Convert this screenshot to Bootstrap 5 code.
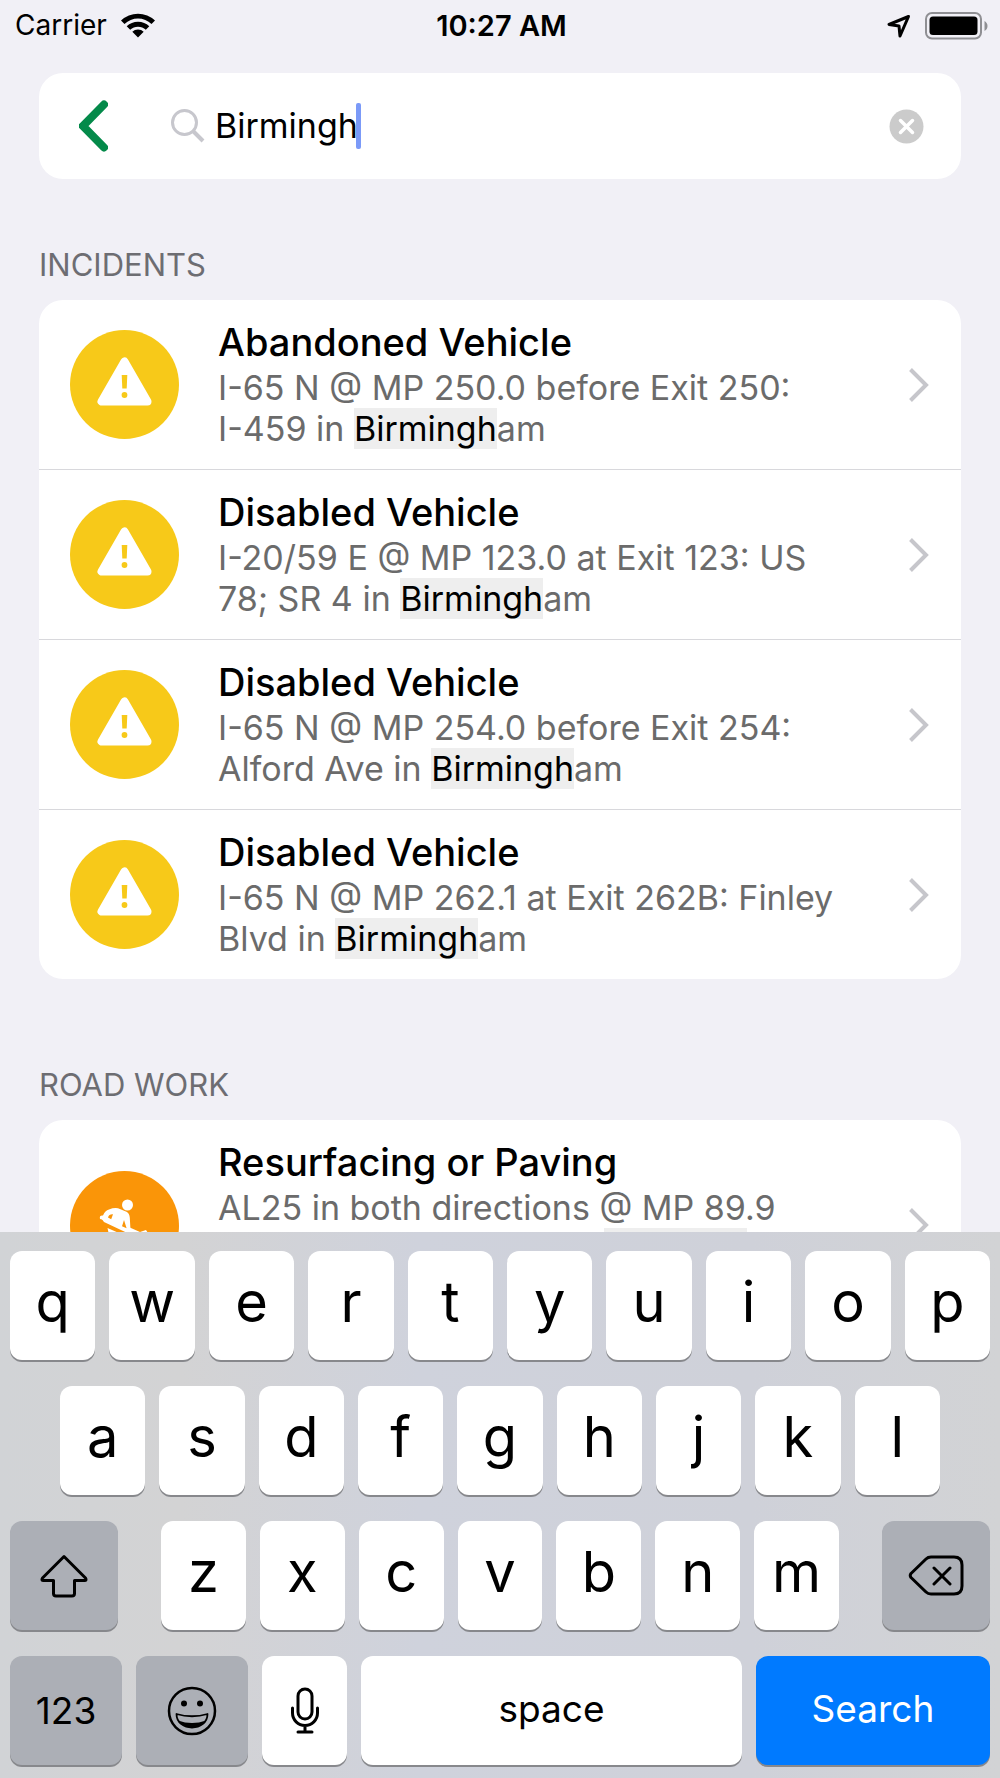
<!DOCTYPE html>
<html lang="en">
<head>
<meta charset="utf-8">
<meta name="viewport" content="width=device-width, initial-scale=1">
<title>Search</title>
<link href="https://cdn.jsdelivr.net/npm/bootstrap@5.3.0/dist/css/bootstrap.min.css" rel="stylesheet">
<style>
  body { background: #f1f0f6; color: #000; font-family: Inter, "Liberation Sans", sans-serif; }
  .screen { min-height: 0; padding: 0 39px; }
  .status-bar { height: 51px; padding: 0 12px 0 15px; font-size: 28px; line-height: 51px; }
  .status-bar > div { flex: 1 1 0; gap: 14px; }
  .status-bar time { font-size: 29px; }
  .search-box { height: 106px; margin-top: 22px; border-radius: 24px; padding: 0 37px 0 40px; }
  .search-icon { margin: 0 10px 0 63px; }
  .search-box input { width: 141px; font-size: 34px; line-height: 46px; outline: 0; color: #000; }
  .caret { width: 5px; height: 46px; border-radius: 2px; background: #7b9af8; }
  .section-title { font-size: 31px; line-height: 40px; color: #6d6d72; font-weight: 400; margin: 66px 0 15px; }
  .section-title.later { margin-top: 86px; }
  .results { border-radius: 24px; }
  .results .list-group-item { padding: 20px 32px 20px 31px; border-color: #d8d8dc; color: #6b6b6b; }
  .disc { width: 109px; height: 109px; }
  .details { margin-left: 39px; font-size: 34px; line-height: 41px; }
  .details h3 { font-size: 38px; line-height: 45px; font-weight: 500; color: #000; margin: 0 0 2px; }
  .details mark { padding: 0; background: #eee; color: #000; }
  .keyboard { padding: 19px 10px 13px; gap: 26px;
    background: linear-gradient(90deg, #d1d3d6, #d3d3d4 18%, #cfd2dc 42%, #cfd1d9 75%, #d2d3d5); }
  .key-row { gap: 14px; }
  .key-row.inset { padding: 0 50px; }
  .key-row.outer { gap: 43px; }
  .key { flex: 1 1 0; min-width: 0; height: 109px; border: 0; border-radius: 12px; padding: 0 0 8px; background: #fff; color: #000;
    display: flex; align-items: center; justify-content: center;
    box-shadow: 0 2px 0 #87888c; font-size: 56px; line-height: 84px; font-weight: 400; }
  .key-dark { background: #acafb6; padding: 0; }
  .key-word { font-size: 37px; font-weight: 400; padding-bottom: 4px; }
  .key-dark.key-word { padding: 0; }
  .key-blue { background: #007aff; color: #fff; }
  .key-side { flex: 0 0 108px; }
  .key-mode { flex: 0 0 112px; }
  .key-mic { flex: 0 0 85px; padding: 0; }
  .key-go { flex: 0 0 234px; }
</style>
</head>
<body>
<svg class="d-none">
  <symbol id="warn" viewBox="0 0 109 109">
    <circle cx="54.500" cy="54.500" r="54.500" fill="#f7c919"/>
    <path d="M54.500 31.500 31.500 71.500h46z" fill="#fff" stroke="#fff" stroke-width="8" stroke-linejoin="round"/>
    <path d="M51.700 45h5.600l-.6 13.500h-4.400z" fill="#f7c919"/><circle cx="54.500" cy="65" r="2.900" fill="#f7c919"/>
  </symbol>
  <symbol id="more" viewBox="0 0 20 34"><path d="m1.500 1.500 15.500 15.500-15.500 15.500" fill="none" stroke="#c6c6cb" stroke-width="4"/></symbol>
</svg>
<div class="vh-100 d-flex flex-column overflow-hidden">
  <header class="status-bar d-flex align-items-center flex-shrink-0">
    <div class="d-flex align-items-center">
      <span>Carrier</span>
      <svg width="34" height="25" viewBox="0 0 34 25" aria-label="Wi-Fi"><path d="M0 7.500a24.500 24.500 0 0 1 34 0L30.500 11a19.500 19.500 0 0 0-27 0zM5.700 13.300a16.200 16.200 0 0 1 22.600 0L24.800 16.800a11.300 11.300 0 0 0-15.600 0zM11.300 18.800a8.200 8.200 0 0 1 11.400 0L17 24.500z"/></svg>
    </div>
    <time class="fw-semibold">10:27 AM</time>
    <div class="d-flex align-items-center justify-content-end">
      <svg width="24" height="24" viewBox="0 0 24 24" aria-label="Location"><path d="M21.500 2.500 2 10.500 12 12l1 10z" fill="none" stroke="#000" stroke-width="3" stroke-linejoin="round"/></svg>
      <svg width="63" height="28" viewBox="0 0 63 28" aria-label="Battery"><rect x="1" y="1" width="55" height="25.500" rx="6" fill="none" stroke="#8f8f93" stroke-width="2"/><rect x="4.500" y="4.500" width="48" height="18.500" rx="3.500"/><path d="M59.500 9c4 2 4 8 0 10z" fill="#8f8f93"/></svg>
    </div>
  </header>

  <main class="screen flex-fill overflow-hidden">
    <form class="search-box bg-white d-flex align-items-center" role="search">
      <button type="button" class="btn p-0 border-0 d-flex" aria-label="Back">
        <svg width="29" height="52" viewBox="0 0 29 52"><path d="M25 4.500 4 26l21 21.500" fill="none" stroke="#048a4a" stroke-width="8" stroke-linecap="round"/></svg>
      </button>
      <label for="query" class="search-icon d-flex flex-shrink-0" aria-label="Search">
        <svg width="34" height="34" viewBox="0 0 34 34"><g fill="none" stroke="#c7c7cd"><circle cx="13.500" cy="13.500" r="12" stroke-width="3"/><path d="m22 22 10 10" stroke-width="4"/></g></svg>
      </label>
      <input id="query" type="text" class="border-0 p-0 bg-transparent" value="Birmingh" autocomplete="off">
      <span class="caret"></span>
      <button type="button" class="btn p-0 border-0 d-flex ms-auto" aria-label="Clear">
        <svg width="35" height="35" viewBox="0 0 35 35"><circle cx="17.500" cy="17.500" r="17" fill="#cbcbcb"/><path d="m11.500 11.500 12 12m0-12-12 12" stroke="#fff" stroke-width="3.500" stroke-linecap="round"/></svg>
      </button>
    </form>

    <h2 class="section-title">INCIDENTS</h2>
    <div class="results list-group">
      <a href="#" class="list-group-item d-flex align-items-center border-start-0 border-end-0 border-top-0">
        <svg class="disc flex-shrink-0"><use href="#warn"/></svg>
        <div class="details"><h3>Abandoned Vehicle</h3>I-65 N @ MP 250.0 before Exit 250: <br>I-459 in <mark>Birmingh</mark>am</div>
        <svg class="ms-auto flex-shrink-0" width="20" height="34"><use href="#more"/></svg>
      </a>
      <a href="#" class="list-group-item d-flex align-items-center border-start-0 border-end-0 border-top-0">
        <svg class="disc flex-shrink-0"><use href="#warn"/></svg>
        <div class="details"><h3>Disabled Vehicle</h3>I-20/59 E @ MP 123.0 at Exit 123: US <br>78; SR 4 in <mark>Birmingh</mark>am</div>
        <svg class="ms-auto flex-shrink-0" width="20" height="34"><use href="#more"/></svg>
      </a>
      <a href="#" class="list-group-item d-flex align-items-center border-start-0 border-end-0 border-top-0">
        <svg class="disc flex-shrink-0"><use href="#warn"/></svg>
        <div class="details"><h3>Disabled Vehicle</h3>I-65 N @ MP 254.0 before Exit 254: <br>Alford Ave in <mark>Birmingh</mark>am</div>
        <svg class="ms-auto flex-shrink-0" width="20" height="34"><use href="#more"/></svg>
      </a>
      <a href="#" class="list-group-item d-flex align-items-center border-0">
        <svg class="disc flex-shrink-0"><use href="#warn"/></svg>
        <div class="details"><h3>Disabled Vehicle</h3>I-65 N @ MP 262.1 at Exit 262B: Finley <br>Blvd in <mark>Birmingh</mark>am</div>
        <svg class="ms-auto flex-shrink-0" width="20" height="34"><use href="#more"/></svg>
      </a>
    </div>

    <h2 class="section-title later">ROAD WORK</h2>
    <div class="results list-group">
      <a href="#" class="list-group-item d-flex align-items-center border-0">
        <svg class="disc flex-shrink-0" viewBox="0 0 109 109">
          <circle cx="54.500" cy="54.500" r="54.500" fill="#fa9508"/>
          <g fill="#fff">
            <circle cx="57.500" cy="34" r="5.500"/>
            <path d="M30 48q-1-4 3-3.500 2-5 6-6 5-2 9-1.200l8.500 3.400q3 1.500 3.300 6l.8 14L32 48.500z"/>
            <path d="M30 45.500 36 46 70 61 76 59 80 65 70 68 34 51z"/>
            <path d="M37.500 57 58 66 64 82H57L50 70 41 82H33L40 68z"/>
          </g>
          <path d="M38 46.500q1-3.500 5-3.200l-1.800 5zM54 49l2.600 8.300-4.600-2z" fill="#fa9508"/>
        </svg>
        <div class="details"><h3>Resurfacing or Paving</h3>AL25 in both directions @ MP 89.9 <br>to MP 102.4 at US 80 in <mark>Birmingh</mark>am<br>Until 5:00 PM</div>
        <svg class="ms-auto flex-shrink-0" width="20" height="34"><use href="#more"/></svg>
      </a>
    </div>
  </main>

  <section class="keyboard d-flex flex-column flex-shrink-0" aria-label="Keyboard">
    <div class="key-row d-flex">
      <button class="key">q</button><button class="key">w</button><button class="key">e</button><button class="key">r</button><button class="key">t</button><button class="key">y</button><button class="key">u</button><button class="key">i</button><button class="key">o</button><button class="key">p</button>
    </div>
    <div class="key-row inset d-flex">
      <button class="key">a</button><button class="key">s</button><button class="key">d</button><button class="key">f</button><button class="key">g</button><button class="key">h</button><button class="key">j</button><button class="key">k</button><button class="key">l</button>
    </div>
    <div class="key-row outer d-flex">
      <button class="key key-dark key-side" aria-label="Shift"><svg width="48" height="44" viewBox="0 0 48 44"><path d="M24 2.500 2.500 24q-1.500 2.500 1 2.500H13.500V39.500q0 2.500 2.500 2.500h16q2.500 0 2.500-2.500V26.500H44.500q2.500 0 1-2.500z" fill="none" stroke="#000" stroke-width="3" stroke-linejoin="round"/></svg></button>
      <div class="key-row d-flex flex-fill">
        <button class="key">z</button><button class="key">x</button><button class="key">c</button><button class="key">v</button><button class="key">b</button><button class="key">n</button><button class="key">m</button>
      </div>
      <button class="key key-dark key-side" aria-label="Delete"><svg width="56" height="42" viewBox="0 0 56 42"><path d="M23 2H46q8 0 8 8V31q0 8-8 8H23q-3 0-5-2L3 22.500q-1.500-2 0-4L18 4q2-2 5-2zM26 13 42 29M42 13 26 29" fill="none" stroke="#000" stroke-width="3" stroke-linecap="round" stroke-linejoin="round"/></svg></button>
    </div>
    <div class="key-row d-flex">
      <button class="key key-dark key-word key-mode">123</button>
      <button class="key key-dark key-mode" aria-label="Emoji"><svg width="50" height="50" viewBox="0 0 50 50"><circle cx="25" cy="25" r="23" fill="none" stroke="#000" stroke-width="2.500"/><circle cx="17" cy="17.500" r="3"/><circle cx="33" cy="17.500" r="3"/><path d="M9.500 28q15.500 4.500 31 0c0 18-31 18-31 0z" fill="none" stroke="#000" stroke-width="1.800" stroke-linejoin="round"/><path d="M11 34.500q14 5 28 0c-6 9.500-22 9.500-28 0z"/></svg></button>
      <button class="key key-mic" aria-label="Dictation"><svg width="30" height="47" viewBox="0 0 30 47"><g fill="none" stroke="#000" stroke-width="3" stroke-linecap="round"><rect x="8" y="2" width="14" height="30" rx="7"/><path d="M2.500 21v5a12.500 12.500 0 0 0 25 0v-5M15 38.500V45M8 45h14"/></g></svg></button>
      <button class="key key-word">space</button>
      <button class="key key-word key-blue key-go">Search</button>
    </div>
  </section>
</div>
<script src="https://cdn.jsdelivr.net/npm/bootstrap@5.3.0/dist/js/bootstrap.bundle.min.js"></script>
</body>
</html>
